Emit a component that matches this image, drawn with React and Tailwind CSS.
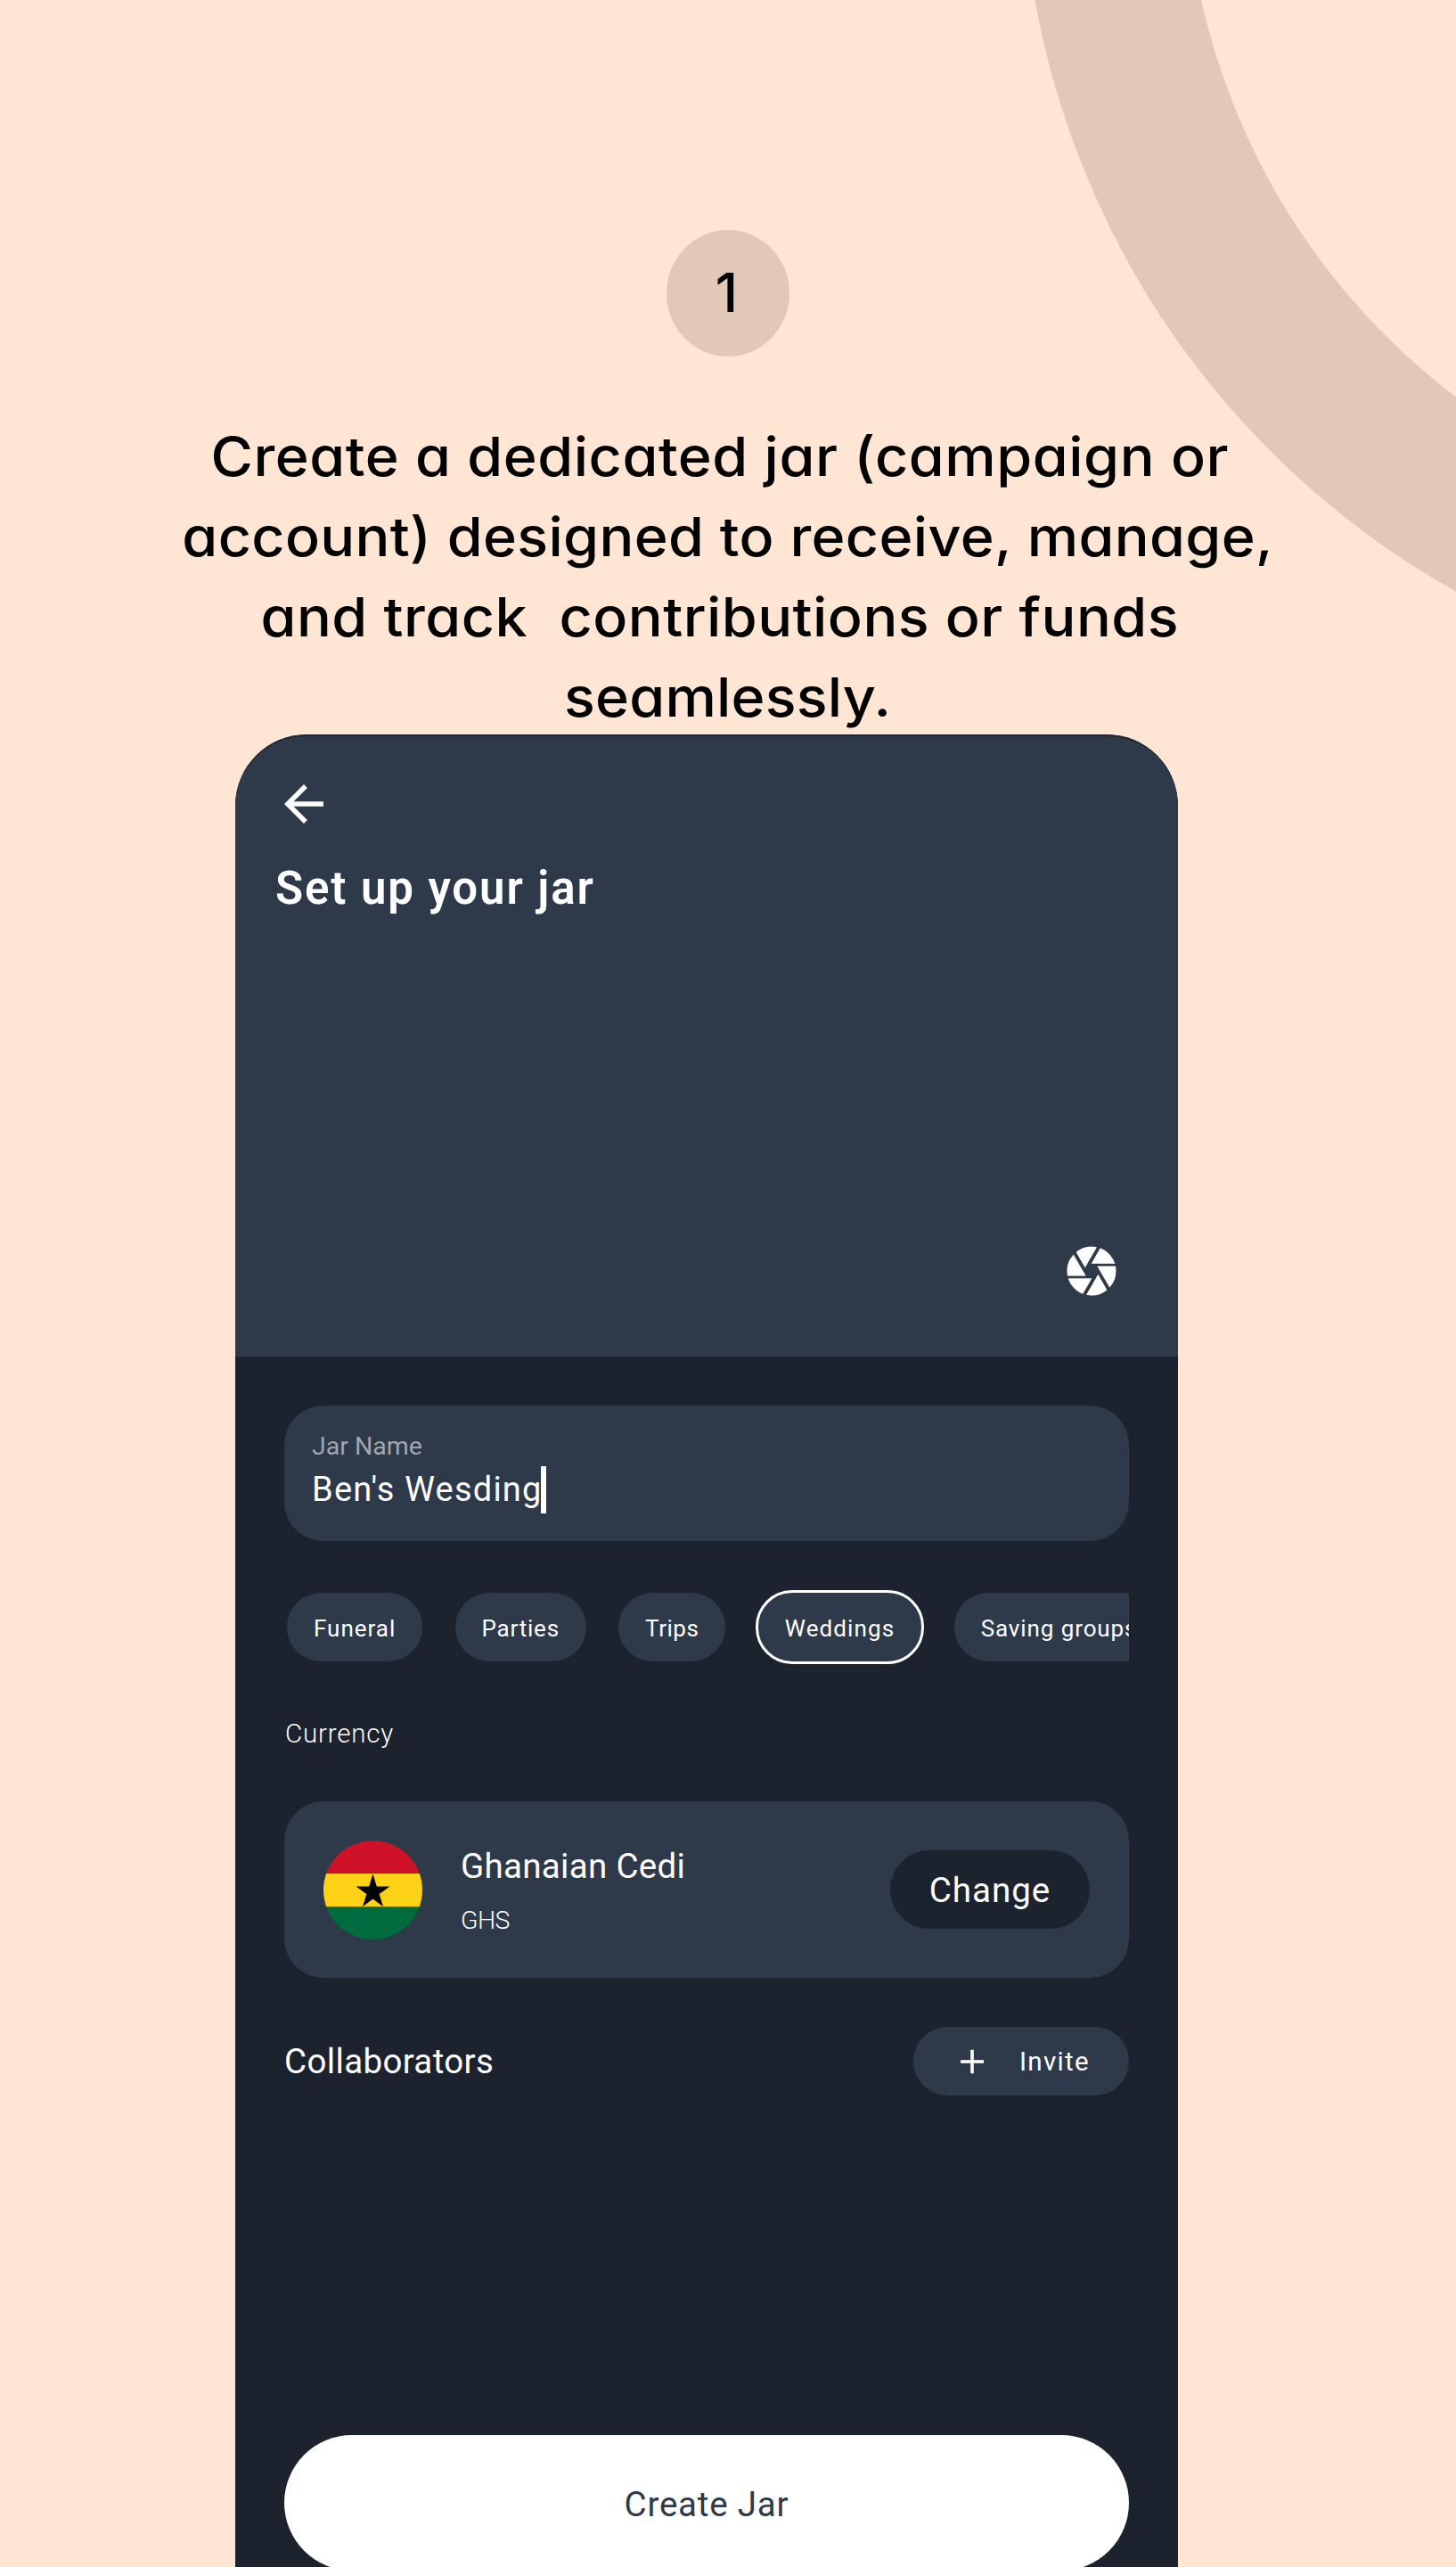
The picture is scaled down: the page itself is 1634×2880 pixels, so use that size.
import React from 'react';
import { MdArrowBack, MdCamera } from 'react-icons/md';

function Ring() {
  return (
    <svg className="absolute inset-0" width="1634" height="2880" viewBox="0 0 1634 2880" fill="none" aria-hidden="true">
      <circle cx="2098.6" cy="-167.2" r="860.3" stroke="#e2c8b7" strokeWidth="183" />
    </svg>
  );
}

function GhanaFlag() {
  return (
    <svg className="shrink-0 rounded-full" width="111" height="111" viewBox="0 0 111 111" aria-hidden="true">
      <rect width="111" height="37.3" fill="#ce1126" />
      <rect y="37" width="111" height="37.5" fill="#fcd116" />
      <rect y="74.3" width="111" height="36.7" fill="#006b3f" />
      <path d="M55.5 37.6L59.8 51.5L74.4 51.5L62.6 60L67 73.9L55.5 65.4L44 73.9L48.4 60L36.6 51.5L51.2 51.5Z" fill="#000" />
    </svg>
  );
}

function Chip({ className, children }) {
  return (
    <button className={`flex h-[77px] shrink-0 items-center rounded-[38px] bg-[#2e3949] pt-[3px] text-[26px] font-[450] leading-none whitespace-nowrap ${className}`}>
      {children}
    </button>
  );
}

function Heading() {
  return (
    <div className="relative flex flex-col items-center pt-[258px] font-['Inter',sans-serif] text-black [font-feature-settings:'cv11']">
      <div className="h-[142px] w-[138px] rounded-[50%] bg-[#e2c8b7] pr-[3px] text-center text-[61px] leading-[140px] font-[550]">1</div>
      <h1 className="mt-[67px] flex h-[357px] scale-x-[1.06] flex-col items-center text-[61px] leading-[90px] font-[450] whitespace-pre">
        <span className="tracking-[0.5px]">{'Create a dedicated jar (campaign or '}</span>
        <span className="tracking-[0.3px]">account) designed to receive, manage,</span>
        <span className="tracking-[0.45px]">{'and track  contributions or funds '}</span>
        <span className="tracking-[0.2px]">seamlessly.</span>
      </h1>
    </div>
  );
}

function CardHeader() {
  return (
    <header className="flex h-[698px] shrink-0 flex-col rounded-t-[80px] border-t-2 border-[#1c2733] bg-[#2e3949] pt-[43px] pr-[64px] pb-[63px] pl-[44px]">
      <MdArrowBack className="size-[66px]" />
      <h2 className="mt-[32px] pl-px text-[51px] leading-[60px] font-[600] tracking-[1.9px]">Set up your jar</h2>
      <MdCamera className="mt-auto size-[66px] self-end" />
    </header>
  );
}

export default function App() {
  return (
    <div className="relative h-[2880px] w-[1634px] overflow-hidden bg-[#ffe5d3]">
      <Ring />
      <Heading />
      <main className="relative ml-[264px] flex h-[2056px] w-[1058px] flex-col overflow-hidden rounded-t-[80px] bg-[#1c222e] font-['Roboto',sans-serif] text-white">
        <CardHeader />
        <div className="flex shrink-0 flex-col px-[55px] pt-[55px]">
          <div className="h-[152px] rounded-[44px] bg-[#2e3949] px-[31px] pt-[29px]">
            <div className="text-[28.5px] leading-[34px] text-[#a2a7af]">Jar Name</div>
            <div className="mt-[5px] flex text-[38px] leading-[52px] tracking-[1.2px]">
              <span>Ben's Wesding</span>
              <span className="-ml-[2px] h-[53px] w-[6px] bg-white" />
            </div>
          </div>

          <div className="mt-[55px] flex h-[83px] items-center gap-[36.4px] overflow-hidden pl-[3px]">
            <Chip className="w-[152.3px] justify-center tracking-[1px]">Funeral</Chip>
            <Chip className="w-[147px] justify-center tracking-[0.8px]">Parties</Chip>
            <Chip className="w-[120.3px] justify-center tracking-[0.5px]">Trips</Chip>
            <Chip className="-mx-[3px] h-[83px] w-[189.5px] justify-center rounded-[41px] border-[3px] border-white tracking-[1.1px]">Weddings</Chip>
            <Chip className="pr-[31px] pl-[30px] tracking-[0.9px]">Saving groups</Chip>
          </div>

          <div className="mt-[60px] pl-px text-[29.5px] leading-[36px] font-[350] tracking-[0.8px]">Currency</div>

          <div className="mt-[58px] flex h-[198px] items-center rounded-[44px] bg-[#2e3949] px-[44px]">
            <GhanaFlag />
            <div className="ml-[43px] pt-[3px]">
              <div className="text-[38.5px] leading-[46px] tracking-[0.3px]">Ghanaian Cedi</div>
              <div className="mt-[21px] text-[28.5px] leading-[34px] font-light tracking-[-0.6px]">GHS</div>
            </div>
            <button className="ml-auto h-[88px] w-[224px] rounded-[44px] bg-[#1c222e] pt-[2px] text-[38.5px] tracking-[1px]">Change</button>
          </div>

          <div className="mt-[55px] flex h-[77px] items-center justify-between">
            <div className="text-[38.5px] tracking-[0.35px]">Collaborators</div>
            <button className="flex h-[77px] w-[242px] items-center gap-[40px] rounded-[38.5px] bg-[#2e3949] pl-[53px]">
              <svg width="26" height="28" viewBox="0 0 26 28" stroke="#fff" strokeWidth="3.6" aria-hidden="true">
                <path d="M13 .8v26.4M0 14h26" />
              </svg>
              <span className="pt-[3px] text-[29.5px] leading-none tracking-[1.3px]">Invite</span>
            </button>
          </div>

          <button className="mt-[381px] h-[152px] rounded-[76px] bg-white pt-[3px] text-[38.5px] tracking-[0.8px] text-[#2f3a49]">Create Jar</button>
        </div>
      </main>
    </div>
  );
}
